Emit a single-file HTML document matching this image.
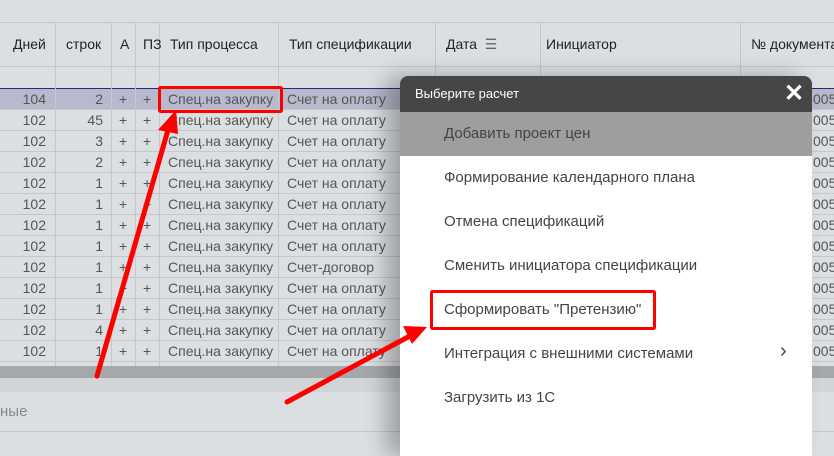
<!DOCTYPE html><html><head><meta charset="utf-8"><style>
body{margin:0;width:834px;height:435px;overflow:hidden;background:#dcdfe2;font-family:"Liberation Sans",sans-serif;position:relative;color:#333}
.a{position:absolute}
.t{position:absolute;font-size:14px;white-space:nowrap}
.h{font-size:14px;color:#222}
.vl{position:absolute;width:1px;background:#c4c8cc;top:22px;height:344px}
.hl{position:absolute;left:0;width:834px;height:1px;background:#c4c8cc}
.pop{left:400px;top:76px;width:412px;height:380px;background:#fff;border-radius:8px 8px 0 0;box-shadow:-14px 0 22px rgba(0,0,0,.28);overflow:hidden}
.it{position:absolute;left:44px;font-size:15px;color:#444}
</style></head><body>
<div class="hl" style="top:22px"></div><div class="hl" style="top:66px"></div><div class="hl" style="top:88px"></div>
<div class="a" style="left:0;top:88px;width:834px;height:21px;background:#b8b9cc;border-top:1px solid #2a2a7a"></div>
<div class="vl" style="left:55px"></div><div class="vl" style="left:111px"></div><div class="vl" style="left:135px"></div><div class="vl" style="left:159px"></div><div class="vl" style="left:278px"></div><div class="vl" style="left:435px"></div><div class="vl" style="left:540px"></div><div class="vl" style="left:740px"></div>
<div class="t h" style="left:13px;top:36px">Дней</div><div class="t h" style="left:66px;top:36px">строк</div><div class="t h" style="left:120px;top:36px">А</div><div class="t h" style="left:143px;top:36px">ПЗ</div><div class="t h" style="left:170px;top:36px">Тип процесса</div><div class="t h" style="left:289px;top:36px">Тип спецификации</div><div class="t h" style="left:446px;top:36px">Дата &nbsp;<span style="color:#666">☰</span></div><div class="t h" style="left:546px;top:36px">Инициатор</div><div class="t h" style="left:751px;top:36px">№ документа</div>
<div id="rows"></div>
<div class="a" style="left:0;top:366px;width:834px;height:12px;background:#a5a8ab"></div>
<div class="a" style="left:0;top:378px;width:834px;height:14px;background:#d2d5d8"></div>
<div class="t" style="left:0;top:403px;color:#888;font-size:15px">ные</div>
<div class="hl" style="top:431px;background:#c4c8cc"></div>
<div class="a pop">
<div class="a" style="left:0;top:0;width:412px;height:36px;background:#464646"></div>
<div class="t" style="left:15px;top:10px;color:#fff;font-size:13px">Выберите расчет</div>
<div class="t" style="left:384px;top:3px;color:#fff;font-size:24px;font-weight:bold">✕</div>
<div class="a" style="left:0;top:36px;width:412px;height:44px;background:#9e9e9e"></div>
<div class="it" style="top:49px">Добавить проект цен</div>
<div class="it" style="top:93px">Формирование календарного плана</div>
<div class="it" style="top:137px">Отмена спецификаций</div>
<div class="it" style="top:181px">Сменить инициатора спецификации</div>
<div class="it" style="top:225px">Сформировать "Претензию"</div>
<div class="it" style="top:269px">Интеграция с внешними системами</div>
<div class="t" style="left:380px;top:264px;color:#444;font-size:20px">›</div>
<div class="it" style="top:313px">Загрузить из 1С</div>
</div>
<svg class="a" style="left:0;top:0" width="834" height="435">
<rect x="159.5" y="87.5" width="122" height="24" fill="none" stroke="#f00" stroke-width="3" rx="1"/>
<rect x="431.5" y="291.5" width="223" height="37" fill="none" stroke="#f00" stroke-width="3" rx="1"/>
<line x1="97" y1="376" x2="168" y2="130" stroke="#f00" stroke-width="5" stroke-linecap="round"/>
<polygon points="176,110 158,130 178,134" fill="#f00"/>
<line x1="287" y1="402" x2="408" y2="337" stroke="#f00" stroke-width="5" stroke-linecap="round"/>
<polygon points="427,327 403,326 412,344" fill="#f00"/>
</svg>
<script>
var d=[["104","2","Счет на оплату"],["102","45","Счет на оплату"],["102","3","Счет на оплату"],["102","2","Счет на оплату"],["102","1","Счет на оплату"],["102","1","Счет на оплату"],["102","1","Счет на оплату"],["102","1","Счет на оплату"],["102","1","Счет-договор"],["102","1","Счет на оплату"],["102","1","Счет на оплату"],["102","4","Счет на оплату"],["102","1","Счет на оплату"]],h="";
d.forEach(function(r,i){var y=88+i*21;h+='<div class="hl" style="top:'+(y+21)+'px"></div><div class="t" style="left:0;width:46px;text-align:right;top:'+(y+3)+'px;color:#555">'+r[0]+'</div><div class="t" style="left:55px;width:48px;text-align:right;top:'+(y+3)+'px;color:#555">'+r[1]+'</div><div class="t" style="left:119px;top:'+(y+3)+'px;color:#555">+</div><div class="t" style="left:143px;top:'+(y+3)+'px;color:#555">+</div><div class="t" style="left:168px;top:'+(y+3)+'px;color:#555">Спец.на закупку</div><div class="t" style="left:287px;top:'+(y+3)+'px;color:#555">'+r[2]+'</div><div class="t" style="left:813px;top:'+(y+3)+'px;color:#555">005</div>';});
document.getElementById("rows").innerHTML=h;
</script>
</body></html>
